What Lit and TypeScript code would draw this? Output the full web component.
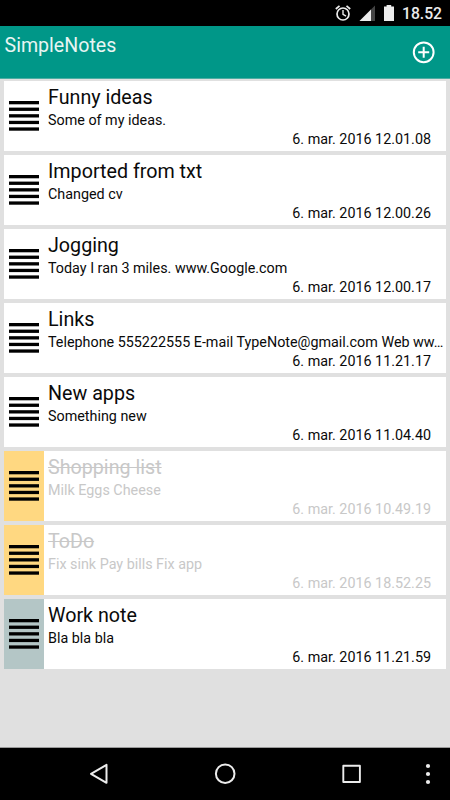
import { LitElement, html, css, svg } from "lit";
import { customElement, property } from "lit/decorators.js";

interface Note {
  title: string;
  text: string;
  date: string;
  color?: "yellow" | "grey";
  done?: boolean;
}

const NOTES: Note[] = [
  { title: "Funny ideas", text: "Some of my ideas.", date: "6. mar. 2016 12.01.08" },
  { title: "Imported from txt", text: "Changed cv", date: "6. mar. 2016 12.00.26" },
  { title: "Jogging", text: "Today I ran 3 miles. www.Google.com", date: "6. mar. 2016 12.00.17" },
  { title: "Links", text: "Telephone 555222555 E-mail TypeNote@gmail.com Web ww…", date: "6. mar. 2016 11.21.17" },
  { title: "New apps", text: "Something new", date: "6. mar. 2016 11.04.40" },
  { title: "Shopping list", text: "Milk Eggs Cheese", date: "6. mar. 2016 10.49.19", color: "yellow", done: true },
  { title: "ToDo", text: "Fix sink Pay bills Fix app", date: "6. mar. 2016 18.52.25", color: "yellow", done: true },
  { title: "Work note", text: "Bla bla bla", date: "6. mar. 2016 11.21.59", color: "grey" },
];

@customElement("note-row")
class NoteRow extends LitElement {
  @property({ attribute: false }) note!: Note;

  static styles = css`
    :host { display: block; }
    .row { display: flex; height: 70px; background: #fff; color: #0a0a0a; }
    .tag { flex: none; width: 39.5px; padding: 20px 0 0 5px; box-sizing: border-box; }
    .yellow { background: #ffd881; }
    .grey { background: #b4c6c6; }
    .lines { display: block; width: 30px; height: 30px; }
    .body { flex: 1; min-width: 0; padding: 4px 0 0 4.5px; }
    .title { font-size: 19.7px; line-height: 26px; height: 26px; white-space: nowrap; }
    .text { font-size: 14.33px; line-height: 18px; height: 19px; white-space: nowrap; }
    .date { font-size: 14.33px; line-height: 19px; padding-right: 15px; text-align: right; }
    .done .body { color: #c8c8c8; }
    .done .title { text-decoration: line-through; }
  `;

  render() {
    const n = this.note;
    return html`<div class="row ${n.done ? "done" : ""}">
      <div class="tag ${n.color ?? ""}">
        <svg class="lines" viewBox="0 0 30 30">
          ${[0, 6.6, 13.2, 19.8, 26.4].map((y) => svg`<rect x="0" y=${y} width="30" height="3.3" />`)}
        </svg>
      </div>
      <div class="body">
        <div class="title">${n.title}</div>
        <div class="text">${n.text}</div>
        <div class="date">${n.date}</div>
      </div>
    </div>`;
  }
}

@customElement("app-root")
class AppRoot extends LitElement {
  static styles = css`
    :host {
      display: flex; flex-direction: column; width: 450px; height: 800px; overflow: hidden;
      background: #e0e0e0; font-family: Roboto, sans-serif;
    }
    svg { display: block; }
    .status { height: 26px; flex: none; background: #000; display: flex; justify-content: flex-end; }
    .clock { width: 48px; color: #ececec; font-size: 15.7px; line-height: 28px; font-weight: 500; }
    .bar {
      flex: none; height: 53px; box-sizing: border-box; padding: 5px 14px 0 4.5px; background: #009788;
      border-bottom: 1px solid #4dada3; display: flex; justify-content: space-between;
    }
    .app { color: #e8f5f3; font-size: 19.6px; line-height: 30px; }
    .add { margin-top: 9px; }
    .list { flex: 1; padding: 2px 4px 0; display: flex; flex-direction: column; gap: 4px; }
    .nav { flex: none; height: 53px; background: #000; border-top: 1px solid #999; box-sizing: border-box; }
  `;

  render() {
    return html`
      <div class="status">
        <svg width="70" height="26" viewBox="332 0 70 26">
          <g fill="none" stroke="#ececec" stroke-width="1.7">
            <circle cx="343" cy="14" r="6" />
            <path d="M343 10v4.3l3 1.9" stroke-width="1.4" />
            <path d="M335.8 9l3.7-3.2M350.2 9l-3.7-3.2" />
          </g>
          <path d="M359.5 21L375 5.5V21z" fill="#444" />
          <path d="M359.5 21L371 9.5V21z" fill="#ececec" />
          <path d="M384 6.5h2.6V5h4.6v1.5H394V21h-10z" fill="#ececec" />
        </svg>
        <div class="clock">18.52</div>
      </div>
      <div class="bar">
        <div class="app">SimpleNotes</div>
        <svg class="add" width="24" height="24" viewBox="0 0 24 24" fill="none" stroke="#fff" stroke-width="2">
          <circle cx="11.7" cy="12.3" r="9.9" />
          <path d="M11.7 6.8v11M6.2 12.3h11" />
        </svg>
      </div>
      <div class="list">${NOTES.map((n) => html`<note-row .note=${n}></note-row>`)}</div>
      <div class="nav">
        <svg width="450" height="52" viewBox="0 748 450 52" fill="none" stroke="#ececec" stroke-width="2" stroke-linejoin="round">
          <path d="M106.5 764.8v18L91 773.8z" />
          <circle cx="225.2" cy="773.7" r="9.3" />
          <rect x="343.3" y="765.8" width="16.6" height="16.2" stroke-width="1.9" />
          <g fill="#ececec" stroke="none">
            <circle cx="428" cy="766" r="2.1" />
            <circle cx="428" cy="774" r="2.1" />
            <circle cx="428" cy="782" r="2.1" />
          </g>
        </svg>
      </div>
    `;
  }
}
